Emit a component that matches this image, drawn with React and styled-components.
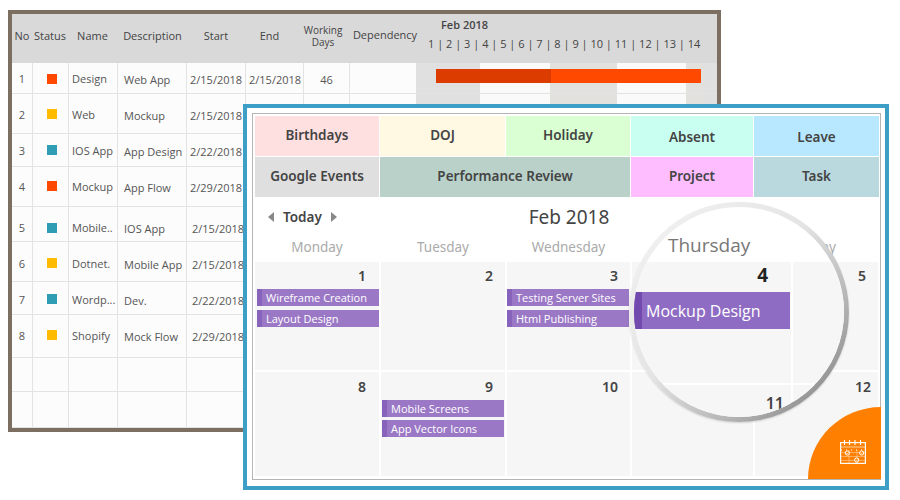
import React from 'react'
import styled, { createGlobalStyle } from 'styled-components'

const GlobalStyle = createGlobalStyle`
  * { box-sizing: border-box; }
  body { margin: 0; background: #fff; font-family: 'Open Sans', sans-serif; }
`

const COLS = '21px 36px 49px 69px 59px 58px 46px 1fr'
const rows = [
  { h: 31, pad: 9, sq: 9, no: 1, color: '#ff4800', name: 'Design', desc: 'Web App', start: '2/15/2018', end: '2/15/2018', days: '46', bar: true },
  { h: 40, pad: 14, sq: 13, no: 2, color: '#ffbb00', name: 'Web', desc: 'Mockup', start: '2/15/2018' },
  { h: 33, pad: 10, sq: 9, no: 3, color: '#2f9db3', name: 'IOS App', desc: 'App Design', start: '2/22/2018' },
  { h: 40, pad: 13, sq: 12, no: 4, color: '#ff4800', name: 'Mockup', desc: 'App Flow', start: '2/29/2018' },
  { h: 35, pad: 14, sq: 14, no: 5, color: '#2f9db3', name: 'Mobile..', desc: 'IOS App', start: '2/15/2018', late: true },
  { h: 40, pad: 15, sq: 14, no: 6, color: '#ffbb00', name: 'Dotnet.', desc: 'Mobile App', start: '2/15/2018', late: true },
  { h: 33, pad: 11, sq: 10, no: 7, color: '#2f9db3', name: 'Wordp...', desc: 'Dev.', start: '2/22/2018', late: true },
  { h: 43, pad: 14, sq: 13, no: 8, color: '#ffbb00', name: 'Shopify', desc: 'Mock Flow', start: '2/29/2018', late: true },
  { h: 34 },
  { h: 36 },
]
const bands = [
  [66, '#fcfcfc'], [64, '#e0e0e0'], [70, '#fafafa'], [67, '#e2e1dd'],
  [69, '#fafafa'], [19, '#e2e1dd'], [12, '#e0e0e0'],
]
const checks = [[7.3, 15], [21.7, 15], [16.7, 22]]

const Page = styled.div`
  position: relative;
  width: 900px;
  height: 500px;
  padding: 10px 0 0 8px;
  overflow: hidden;
`
const Sheet = styled.div`
  width: 713px;
  height: 422px;
  border: 4px solid #7c6f62;
  background: #fcfcfc;
`
const HeaderRow = styled.div`
  display: grid;
  grid-template-columns: 20px 36px 49px 71px 56px 51px 56px 68px 1fr;
  height: 49px;
  padding-bottom: 6px;
  background: #d9d9d9;
  color: #444;
  font-size: 11px;
  align-items: center;
  text-align: center;
`
const HeadCell = styled.div`
  white-space: nowrap;
  line-height: 12px;
  font-size: ${p => p.$size || 11}px;
  margin-top: ${p => p.$up ? -2 : 0}px;
`
const Timeline = styled.div`
  text-align: left;
  padding-left: 9px;
  display: flex;
  flex-direction: column;
  gap: 7px;
  margin-top: -2px;
`
const Month = styled.div`
  font-weight: 600;
  font-size: 11px;
  line-height: 12px;
  padding-left: 13px;
`
const Days = styled.div`
  font-size: 11px;
  line-height: 12px;
  white-space: nowrap;
`
const Row = styled.div`
  display: grid;
  grid-template-columns: ${COLS};
  height: ${p => p.$h}px;
  border-bottom: 1px solid #e3e3e3;
`
const Cell = styled.div`
  border-right: 1px solid #e3e3e3;
  color: #555;
  font-size: 11px;
  line-height: 14px;
  white-space: nowrap;
  overflow: visible;
  padding: ${p => p.$top}px 0 0 ${p => p.$left || 0}px;
  text-align: ${p => p.$center ? 'center' : 'left'};
`
const Square = styled.div`
  width: 10px;
  height: 10px;
  margin: 2px auto 0;
  background: ${p => p.$color};
`
const GanttCell = styled.div`
  position: relative;
  display: flex;
`
const Band = styled.div`
  width: ${p => p.$w}px;
  background: ${p => p.$bg};
`
const Bar = styled.div`
  position: absolute;
  left: 86px;
  top: 6px;
  width: 265px;
  height: 14px;
  background: #ff4800;
`
const BarDone = styled.div`
  width: 115px;
  height: 100%;
  background: #dc3c00;
`

const Calendar = styled.div`
  position: absolute;
  left: 243px;
  top: 104px;
  width: 646px;
  height: 386px;
  border: 4px solid #3d9fc5;
  background: #fff;
  padding: 5px;
  font-family: 'Noto Sans', sans-serif;
`
const Frame = styled.div`
  position: relative;
  width: 629px;
  height: 367px;
  border: 1px solid #b5b5b5;
  padding: 2px 2px 2px 2px;
`
const Legend = styled.div`
  display: grid;
  grid-template-columns: 124px 125px 124px 122px 1fr;
  grid-auto-rows: 40px;
  gap: 1px;
  margin-right: -1px;
`
const Tag = styled.div`
  display: flex;
  align-items: center;
  justify-content: center;
  grid-column: span ${p => p.$span || 1};
  background: ${p => p.$bg};
  color: #444;
  font-size: 13.5px;
  font-weight: 600;
  padding: ${p => p.$low ? '2px 0 0' : '0 0 2px'};
`
const NavRow = styled.div`
  display: grid;
  grid-template-columns: 1fr auto 1fr;
  align-items: center;
  height: 37px;
  padding: 2px 0 0 13px;
`
const TodayNav = styled.div`
  display: flex;
  align-items: center;
  gap: 9px;
  color: #444;
  font-size: 13.5px;
  font-weight: 600;
`
const Arrow = styled.span`
  width: 0;
  height: 0;
  border-top: 5px solid transparent;
  border-bottom: 5px solid transparent;
  border-right: ${p => p.$dir === 'left' ? '6px solid #888' : '0'};
  border-left: ${p => p.$dir === 'right' ? '6px solid #888' : '0'};
`
const Title = styled.div`
  color: #444;
  font-size: 19px;
  margin-left: -8px;
`
const WeekRow = styled.div`
  display: grid;
  grid-template-columns: 124px 124px 123px 121px 1fr;
  gap: 2px;
  height: 28px;
  padding-bottom: 2px;
`
const WeekDay = styled.div`
  display: flex;
  align-items: center;
  justify-content: center;
  color: #aaa;
  font-size: 13.5px;
`
const MonthGrid = styled.div`
  display: grid;
  grid-template-columns: 124px 124px 123px 121px 1fr;
  grid-template-rows: 108px 104px;
  gap: 2px;
`
const DayCell = styled.div`
  background: #f6f6f6;
  padding-top: ${p => p.$top || 5}px;
  display: flex;
  flex-direction: column;
  gap: ${p => p.$gap || 4}px;
`
const DayNo = styled.div`
  text-align: right;
  color: #444;
  font-size: 14px;
  font-weight: 600;
  line-height: 18px;
  height: 18px;
  padding-right: ${p => p.$pad || 12}px;
  margin-bottom: ${p => p.$mb || 0}px;
`
const Event = styled.div`
  height: 17px;
  margin-left: ${p => p.$left ?? 1}px;
  margin-right: ${p => p.$right ?? 1}px;
  border-left: 5px solid #8763bb;
  background: #9b78c6;
  color: #fff;
  font-family: 'Open Sans', sans-serif;
  font-size: 11px;
  line-height: 17px;
  padding-left: 4px;
  white-space: nowrap;
`

const Lens = styled.div`
  position: absolute;
  left: 376px;
  top: 88px;
  width: 220px;
  height: 220px;
  border-radius: 50%;
  padding: 5px;
  background: linear-gradient(135deg, #f4f4f4 0%, #e4e4e4 45%, #b4b4b4 72%, #888 92%);
  box-shadow: 0 1px 2px rgba(0, 0, 0, 0.15);
`
const LensView = styled.div`
  width: 210px;
  height: 210px;
  border-radius: 50%;
  overflow: hidden;
  background: #fff;
`
const LensHead = styled.div`
  height: 55px;
  padding: 26px 0 0 34px;
  color: #777;
  font-size: 19px;
  line-height: 24px;
  font-family: 'Open Sans', sans-serif;
`
const LensGrid = styled.div`
  display: grid;
  grid-template-columns: 157px 1fr;
  grid-template-rows: 121px 1fr;
  gap: 2px;
  height: 155px;
`
const LensCell = styled.div`
  background: #f6f6f6;
  padding-top: ${p => p.$top}px;
`
const LensNo = styled.div`
  text-align: right;
  color: ${p => p.$big ? '#222' : '#444'};
  font-size: ${p => p.$big ? 19 : 16}px;
  font-weight: ${p => p.$big ? 700 : 600};
  line-height: 20px;
  padding-right: ${p => p.$pad}px;
`
const LensEvent = styled.div`
  height: 37px;
  margin: 7px 1px 0 0;
  border-left: 8px solid #7249ad;
  background: #8f6cc3;
  color: #fff;
  font-family: 'Open Sans', sans-serif;
  font-size: 16px;
  line-height: 38px;
  padding-left: 4px;
  white-space: nowrap;
`
const Corner = styled.div`
  position: absolute;
  right: -1px;
  bottom: 0;
  width: 73px;
  height: 72px;
  border-radius: 100% 0 0 0;
  background: #ff8000;
  display: flex;
  justify-content: flex-end;
  align-items: flex-end;
  padding: 0 15px 15px 0;
`

const CalendarIcon = () => (
  <svg width="26" height="26" viewBox="0 0 26 26" fill="none" stroke="#fff">
    <rect x="0.6" y="4.6" width="24.8" height="20.8" strokeWidth="1.2" />
    <path d="M4.5 2v5M9.5 2v5M15 2v5M20.5 2v5" strokeWidth="1.1" />
    <path d="M1 9h24" strokeWidth="0.8" opacity="0.8" />
    <path d="M1 12h24" strokeWidth="1" strokeDasharray="1 4" />
    <path d="M1 14.5h24M1 18.5h24M1 22.5h24M9 12v13M17 12v13" strokeWidth="0.6" opacity="0.6" />
    {checks.map(([x, y]) => (
      <g key={x}>
        <circle cx={x} cy={y} r="2.1" fill="#ff8000" strokeWidth="1" />
        <path d={`M${x - 1} ${y}l0.8 0.8l1.3-1.5`} strokeWidth="0.7" />
      </g>
    ))}
  </svg>
)

const GanttTable = () => (
  <Sheet>
    <HeaderRow>
      <HeadCell>No</HeadCell>
      <HeadCell>Status</HeadCell>
      <HeadCell>Name</HeadCell>
      <HeadCell>Description</HeadCell>
      <HeadCell>Start</HeadCell>
      <HeadCell>End</HeadCell>
      <HeadCell $size={10}>Working<br />Days</HeadCell>
      <HeadCell $up>Dependency</HeadCell>
      <Timeline>
        <Month>Feb 2018</Month>
        <Days>1 | 2 | 3 | 4 | 5 | 6 | 7 | 8 | 9 | 10 | 11 | 12 | 13 | 14</Days>
      </Timeline>
    </HeaderRow>
    {rows.map((r, i) => (
      <Row key={i} $h={r.h}>
        <Cell $top={r.pad} $center>{r.no}</Cell>
        <Cell $top={r.sq} $left={2}>{r.color && <Square $color={r.color} />}</Cell>
        <Cell $top={r.pad} $left={3}>{r.name}</Cell>
        <Cell $top={r.pad + 1} $left={6}>{r.desc}</Cell>
        <Cell $top={r.pad + 1} $left={r.late ? 5 : 3}>{r.start}</Cell>
        <Cell $top={r.pad + 1} $left={3}>{r.end}</Cell>
        <Cell $top={r.pad + 1} $center>{r.days}</Cell>
        <GanttCell>
          {bands.map(([w, bg]) => <Band key={`${w}${bg}`} $w={w} $bg={bg} />)}
          {r.bar && <Bar><BarDone /></Bar>}
        </GanttCell>
      </Row>
    ))}
  </Sheet>
)

const CalendarCard = () => (
  <Calendar>
    <Frame>
      <Legend>
        <Tag $bg="#ffe0e0">Birthdays</Tag>
        <Tag $bg="#fff8e3">DOJ</Tag>
        <Tag $bg="#d9ffd2">Holiday</Tag>
        <Tag $bg="#c8fff0" $low>Absent</Tag>
        <Tag $bg="#b8e8ff" $low>Leave</Tag>
        <Tag $bg="#dfdfdf">Google Events</Tag>
        <Tag $bg="#b9d1c9" $span={2}>Performance Review</Tag>
        <Tag $bg="#fdbdff">Project</Tag>
        <Tag $bg="#b9d9de">Task</Tag>
      </Legend>
      <NavRow>
        <TodayNav>
          <Arrow $dir="left" />
          Today
          <Arrow $dir="right" />
        </TodayNav>
        <Title>Feb 2018</Title>
      </NavRow>
      <WeekRow>
        <WeekDay>Monday</WeekDay>
        <WeekDay>Tuesday</WeekDay>
        <WeekDay>Wednesday</WeekDay>
        <WeekDay />
        <WeekDay>Friday</WeekDay>
      </WeekRow>
      <MonthGrid>
        <DayCell>
          <DayNo $pad={13}>1</DayNo>
          <Event $left={2} $right={0}>Wireframe Creation</Event>
          <Event $left={2} $right={0}>Layout Design</Event>
        </DayCell>
        <DayCell><DayNo>2</DayNo></DayCell>
        <DayCell>
          <DayNo>3</DayNo>
          <Event $left={0}>Testing Server Sites</Event>
          <Event $left={0}>Html Publishing</Event>
        </DayCell>
        <DayCell />
        <DayCell><DayNo>5</DayNo></DayCell>
        <DayCell $top={6}><DayNo $pad={13}>8</DayNo></DayCell>
        <DayCell $top={6} $gap={3}>
          <DayNo $mb={1}>9</DayNo>
          <Event>Mobile Screens</Event>
          <Event>App Vector Icons</Event>
        </DayCell>
        <DayCell $top={6}><DayNo>10</DayNo></DayCell>
        <DayCell />
        <DayCell $top={6}><DayNo $pad={7}>12</DayNo></DayCell>
      </MonthGrid>
      <Lens>
        <LensView>
          <LensHead>Thursday</LensHead>
          <LensGrid>
            <LensCell $top={3}>
              <LensNo $big $pad={23}>4</LensNo>
              <LensEvent>Mockup Design</LensEvent>
            </LensCell>
            <LensCell />
            <LensCell $top={8}><LensNo $pad={7}>11</LensNo></LensCell>
            <LensCell />
          </LensGrid>
        </LensView>
      </Lens>
      <Corner><CalendarIcon /></Corner>
    </Frame>
  </Calendar>
)

export default function App() {
  return (
    <Page>
      <GlobalStyle />
      <GanttTable />
      <CalendarCard />
    </Page>
  )
}
